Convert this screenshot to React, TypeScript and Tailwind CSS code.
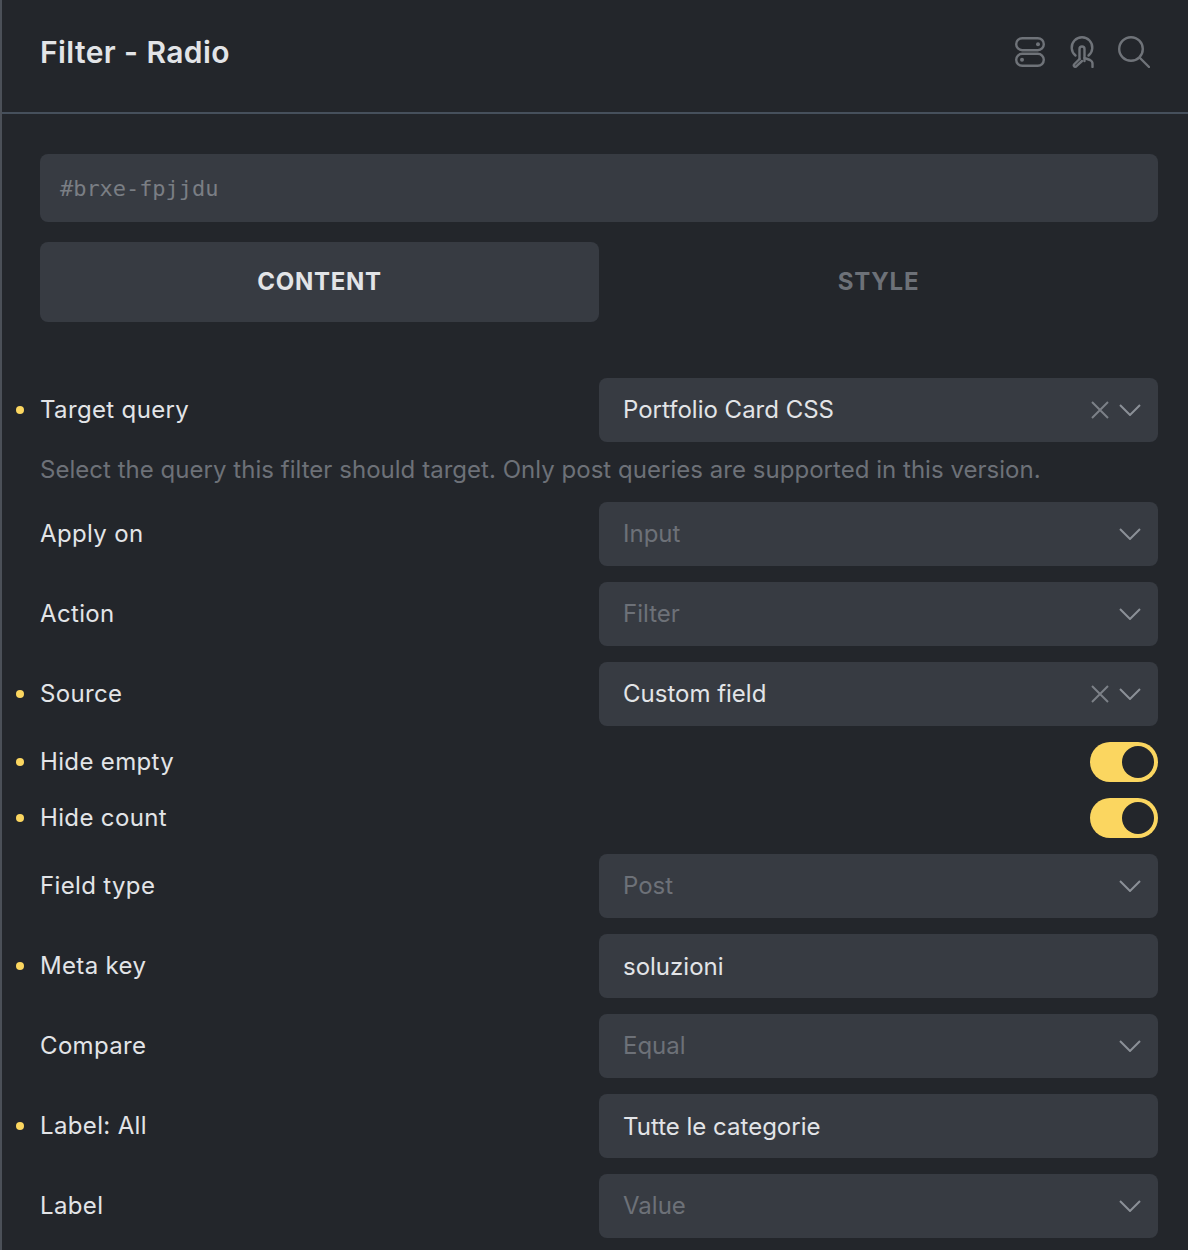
// one row of the settings panel
type Row = {
  label: string;
  dot?: boolean;
  value: string;
  kind: "select" | "input";
  active?: boolean;
  clear?: boolean;
};

const Chevron = () => (
  <svg width="22" height="12" viewBox="0 0 22 12" fill="none" stroke="#8b9097" strokeWidth="2" className="shrink-0">
    <path d="M1 1l10 10L21 1" />
  </svg>
);

const Cross = () => (
  <svg width="18" height="18" viewBox="0 0 18 18" fill="none" stroke="#7c8087" strokeWidth="2" className="shrink-0">
    <path d="M1 1l16 16M17 1L1 17" />
  </svg>
);

function Label({ text, dot }: { text: string; dot?: boolean }) {
  return (
    <div className="relative w-[597px] pl-[38px] text-[24px] tracking-[0.35px] text-[#e2e4e7]">
      {dot && <span className="absolute left-[14px] top-1/2 -mt-1 h-2 w-2 rounded-full bg-[#fbd660]" />}
      {text}
    </div>
  );
}

function Field({ row }: { row: Row }) {
  return (
    <div className="flex items-center">
      <Label text={row.label} dot={row.dot} />
      <div className="flex h-16 w-[559px] items-center rounded-lg bg-[#373b42] pl-6 pr-[17px]">
        <span
          className={
            "flex-1 text-[24px] " +
            (row.active ? "text-[#e2e4e7] " : "text-[#6d7178] ") +
            (row.kind === "input" ? "pt-[2px]" : "")
          }
        >
          {row.value}
        </span>
        {row.clear && <span className="mr-[10px] flex"><Cross /></span>}
        {row.kind === "select" && <Chevron />}
      </div>
    </div>
  );
}

function Toggle({ label }: { label: string }) {
  return (
    <div className="flex items-center">
      <Label text={label} dot />
      <div className="flex w-[559px] justify-end">
        <div className="flex h-10 w-[68px] items-center justify-end rounded-full bg-[#fbd660] pr-1">
          <div className="h-8 w-8 rounded-full bg-[#23262b]" />
        </div>
      </div>
    </div>
  );
}

const rowsTop: Row[] = [
  { label: "Apply on", value: "Input", kind: "select" },
  { label: "Action", value: "Filter", kind: "select" },
  { label: "Source", dot: true, value: "Custom field", kind: "select", active: true, clear: true },
];

const rowsBottom: Row[] = [
  { label: "Field type", value: "Post", kind: "select" },
  { label: "Meta key", dot: true, value: "soluzioni", kind: "input", active: true },
  { label: "Compare", value: "Equal", kind: "select" },
  { label: "Label: All", dot: true, value: "Tutte le categorie", kind: "input", active: true },
  { label: "Label", value: "Value", kind: "select" },
];

export default function App() {
  return (
    <div
      className="h-[1250px] w-[1188px] overflow-hidden border-l-2 border-[#4b5058] bg-[#23262b]"
      style={{ fontFamily: "Inter, 'Liberation Sans', sans-serif" }}
    >
      {/* header */}
      <div className="flex h-[114px] items-center justify-between border-b-2 border-[#46505c] pb-2 pl-[38px] pr-[38px]">
        <h1 className="text-[30px] font-semibold tracking-[0.4px] text-[#e2e4e7]">Filter - Radio</h1>
        <div className="flex items-center gap-6">
          <svg width="31" height="30" viewBox="0 0 31 30" fill="none" stroke="#6f7379" strokeWidth="2.4">
            <rect x="1.2" y="1.2" width="27.6" height="12" rx="6" />
            <rect x="1.2" y="16.8" width="27.6" height="12" rx="6" />
            <circle cx="23" cy="7.2" r="2" fill="#6f7379" stroke="none" />
            <circle cx="7" cy="22.8" r="2" fill="#6f7379" stroke="none" />
          </svg>
          <svg width="24" height="32" viewBox="0 0 24 32" fill="none" stroke="#6f7379" strokeWidth="2.4" strokeLinecap="round" strokeLinejoin="round">
            <path d="M5.5 19.5a10.3 10.3 0 1 1 13 0" />
            <path d="M9.5 23V13a2.5 2.5 0 0 1 5 0v9l5.5 2c1.6.8 2.5 2 2.5 3.5V31" />
            <path d="M14.5 22v3M9.5 23l-5 5c-1 1-1 1.6-.3 2.3s1.4.7 2.3-.2l5.5-5.1" />
          </svg>
          <svg width="32" height="32" viewBox="0 0 32 32" fill="none" stroke="#6f7379" strokeWidth="2.4" strokeLinecap="round">
            <circle cx="13" cy="13" r="11.8" />
            <path d="M22 22l9 9" />
          </svg>
        </div>
      </div>

      <div className="flex flex-col pl-[38px] pr-[30px] pt-10">
        {/* element id */}
        <div
          className="flex h-[68px] items-center rounded-lg bg-[#373b42] pl-5 text-[22px] tracking-[-0.05px] text-[#7a7e84]"
          style={{ fontFamily: "'DejaVu Sans Mono', monospace" }}
        >
          #brxe-fpjjdu
        </div>

        {/* tabs */}
        <div className="mt-5 flex">
          <div className="flex h-20 w-[559px] items-center justify-center rounded-lg bg-[#373b42] text-[24px] font-bold tracking-[0.7px] text-[#e2e4e7]">
            CONTENT
          </div>
          <div className="flex h-20 w-[559px] items-center justify-center text-[24px] font-bold tracking-[0.8px] text-[#6d7178]">
            STYLE
          </div>
        </div>
      </div>

      {/* controls */}
      <div className="flex flex-col pr-[30px] pt-14">
        <Field row={{ label: "Target query", dot: true, value: "Portfolio Card CSS", kind: "select", active: true, clear: true }} />
        <p className="flex h-[60px] items-center pb-1 pl-[38px] text-[24px] tracking-[0.03px] text-[#6d7178]">
          Select the query this filter should target. Only post queries are supported in this version.
        </p>
        <div className="flex flex-col gap-4">
          {rowsTop.map((r) => (
            <Field key={r.label} row={r} />
          ))}
          <Toggle label="Hide empty" />
          <Toggle label="Hide count" />
          {rowsBottom.map((r) => (
            <Field key={r.label} row={r} />
          ))}
        </div>
      </div>
    </div>
  );
}
